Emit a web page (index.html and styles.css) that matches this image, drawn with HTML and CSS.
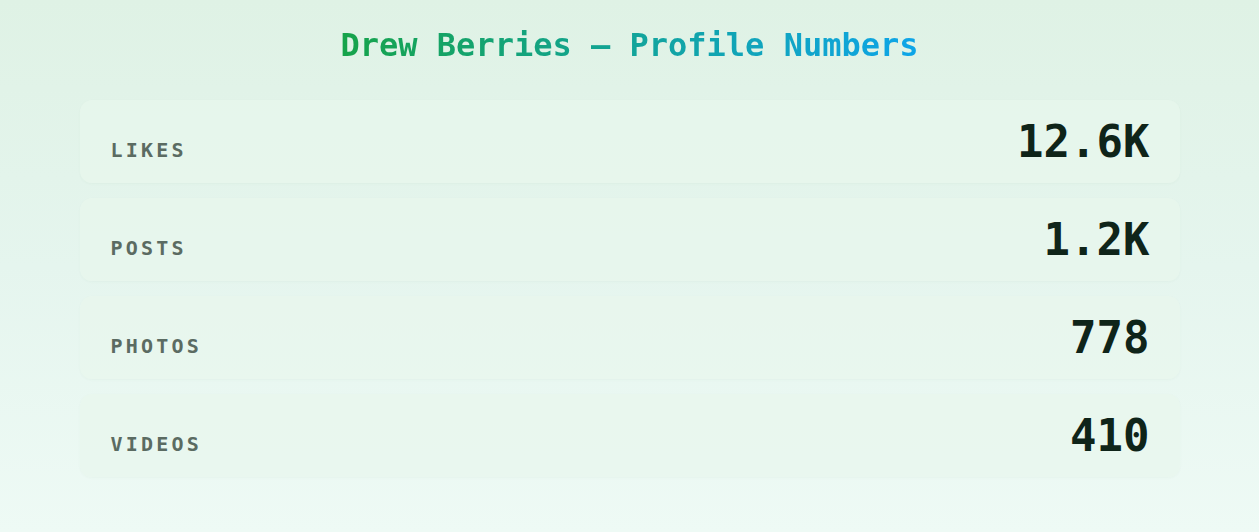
FILE: index.html
```html
<!DOCTYPE html>
<html lang="en">
<head>
  <meta charset="UTF-8" />
  <title>Drew Berries - Profile Numbers</title>
  <link rel="stylesheet" href="styles.css">
</head>
<body>
  <main class="page">
    <h1 class="title">Drew Berries — Profile Numbers</h1>

    <div class="stats">
      <div class="stat">
        <span class="label">Likes</span>
        <span class="value">12.6K</span>
      </div>
      <div class="stat">
        <span class="label">Posts</span>
        <span class="value">1.2K</span>
      </div>
      <div class="stat">
        <span class="label">Photos</span>
        <span class="value">778</span>
      </div>
      <div class="stat">
        <span class="label">Videos</span>
        <span class="value">410</span>
      </div>
    </div>
  </main>
</body>
</html>
```

FILE: styles.css
```css
html, body {
  height: 100%;
}

body {
  margin: 0;
  background: linear-gradient(180deg, #dff2e5 0%, #e5f5ee 50%, #eefaf5 100%);
  font-family: "DejaVu Sans Mono", "Liberation Mono", monospace;
}

.page {
  max-width: 1100px;
  margin: 0 auto;
  padding-top: 25px;
}

.title {
  margin: 0 auto 35px;
  width: fit-content;
  font-size: 32px;
  line-height: 40px;
  font-weight: bold;
  text-align: center;
  background: linear-gradient(90deg, #16a34a 0%, #0ea5e9 100%);
  -webkit-background-clip: text;
  background-clip: text;
  color: transparent;
}

.stats {
  display: flex;
  flex-direction: column;
  gap: 15px;
}

.stat {
  display: flex;
  justify-content: space-between;
  align-items: baseline;
  padding: 16px 30px 16px 31px;
  border-radius: 12px;
  background: rgba(232, 246, 236, 0.7);
  box-shadow: 0 1px 3px rgba(20, 80, 40, 0.03);
}

.label {
  font-size: 20px;
  font-weight: bold;
  letter-spacing: 3.2px;
  text-transform: uppercase;
  color: #5b6b62;
}

.value {
  font-size: 44px;
  line-height: 51px;
  font-weight: bold;
  color: #0f2419;
}
```
